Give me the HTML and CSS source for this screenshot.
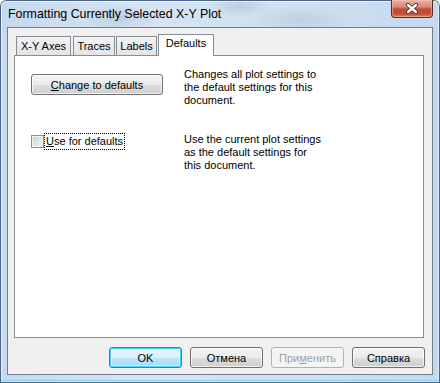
FILE: index.html
```html
<!DOCTYPE html>
<html lang="en">
<head>
    <meta charset="UTF-8">
    <title>Formatting Currently Selected X-Y Plot</title>
    <link rel="stylesheet" href="styles.css">
</head>
<body>
    <div class="window">
        <div class="titlebar">
            <span class="title">Formatting Currently Selected X-Y Plot</span>
            <button type="button" class="close" aria-label="Close">
                <svg width="14" height="11" viewBox="0 0 14 11">
                    <path d="M3 2 L11 9 M11 2 L3 9" stroke="#4a2a26" stroke-width="4.2" stroke-linecap="round"/>
                    <path d="M3 2 L11 9 M11 2 L3 9" stroke="#ffffff" stroke-width="2.4" stroke-linecap="round"/>
                </svg>
            </button>
        </div>

        <div class="client">
            <div class="tabs">
                <div class="tab tab-axes">X-Y Axes</div>
                <div class="tab tab-traces">Traces</div>
                <div class="tab tab-labels">Labels</div>
                <div class="tab tab-defaults active">Defaults</div>
            </div>

            <div class="panel">
                <div class="row">
                    <div class="control">
                        <button type="button" class="button wide"><u>C</u>hange to defaults</button>
                    </div>
                    <p class="desc">Changes all plot settings to<br>the default settings for this<br>document.</p>
                </div>
                <div class="row second">
                    <label class="control check">
                        <span class="box"></span>
                        <span class="focus"><u>U</u>se for defaults</span>
                    </label>
                    <p class="desc">Use the current plot settings<br>as the default settings for<br>this document.</p>
                </div>
            </div>

            <div class="dialog-buttons">
                <button type="button" class="button default">OK</button>
                <button type="button" class="button">Отмена</button>
                <button type="button" class="button disabled">При<u>м</u>енить</button>
                <button type="button" class="button">Справка</button>
            </div>
        </div>
    </div>
</body>
</html>
```

FILE: styles.css
```css
body {
    margin: 0;
    font-family: 'Liberation Sans', Arial, sans-serif;
    font-size: 11px;
    color: #000;
}

.window {
    width: 440px;
    height: 383px;
    box-sizing: border-box;
    border-radius: 6px 6px 0 0;
    background:
        radial-gradient(ellipse 40px 14px at 120px 18px, rgba(150, 165, 185, 0.35), transparent),
        radial-gradient(ellipse 30px 12px at 240px 6px, rgba(140, 155, 175, 0.3), transparent),
        radial-gradient(ellipse 50px 14px at 300px 20px, rgba(150, 165, 185, 0.3), transparent),
        linear-gradient(to right, #c6d9ee 0%, #d6e4f3 30%, #d0e0f1 70%, #c4d8ee 100%);
    box-shadow:
        inset 0 0 0 1px #4d6688,
        inset 0 0 0 2px rgba(255, 255, 255, 0.55),
        inset 0 -3px 0 #86d4f2;
}

.titlebar {
    height: 27px;
    display: flex;
    justify-content: space-between;
    align-items: flex-start;
}

.title {
    font-size: 12.4px;
    padding: 7px 0 0 8px;
    color: #000;
}

.close {
    width: 42px;
    height: 18px;
    margin-right: 7px;
    padding: 0;
    border: 1px solid #5d2a22;
    border-top: none;
    border-radius: 0 0 4px 4px;
    background: linear-gradient(#eab0a2 0%, #d98b7a 40%, #c44f3a 52%, #c24a33 78%, #dd7c5d 100%);
    box-shadow: inset 0 0 0 1px rgba(255, 210, 200, 0.45);
    display: flex;
    align-items: center;
    justify-content: center;
}

.close svg {
    display: block;
}

.client {
    margin: 0 7px;
    width: 426px;
    height: 348px;
    box-sizing: border-box;
    border: 1px solid #6f7d8f;
    background-color: #f0f0f0;
}

.tabs {
    display: flex;
    align-items: flex-end;
    height: 21px;
    margin: 6px 0 0 8px;
    position: relative;
    z-index: 1;
}

.tab {
    box-sizing: border-box;
    height: 19px;
    margin-right: 1px;
    border: 1px solid #898c95;
    border-bottom: none;
    background: linear-gradient(#f3f3f3, #e4e4e4);
    text-align: center;
    line-height: 19px;
}

.tab-axes { width: 55px; }
.tab-traces { width: 42px; margin-left: 1px; }
.tab-labels { width: 41px; }

.tab.active {
    width: 56px;
    height: 22px;
    margin-bottom: -1px;
    background: #fff;
    line-height: 17px;
}

.panel {
    margin-left: 6px;
    width: 410px;
    height: 283px;
    box-sizing: border-box;
    border: 1px solid #898c95;
    background-color: #fff;
    padding-top: 12px;
}

.row {
    display: grid;
    grid-template-columns: 153px auto;
    padding-left: 16px;
}

.row.second {
    margin-top: 26px;
}

.desc {
    margin: 0;
    line-height: 13px;
}

.control {
    padding-top: 6px;
}

.button {
    box-sizing: border-box;
    width: 73px;
    height: 21px;
    padding: 0;
    font-family: inherit;
    font-size: 11px;
    font-weight: normal;
    color: #000;
    border: 1px solid #707070;
    border-radius: 3px;
    background: linear-gradient(#f2f2f2 0%, #ebebeb 50%, #dddddd 51%, #cfcfcf 100%);
    box-shadow: inset 0 0 0 1px rgba(255, 255, 255, 0.7);
}

.button.wide {
    width: 132px;
}

.button.default {
    border-color: #3c7fb1;
    background: linear-gradient(#eaf6fd 0%, #d9f0fc 50%, #bee6fd 51%, #a7d9f5 100%);
    box-shadow: inset 0 0 0 1px #48d0f8, inset 0 0 0 2px rgba(255, 255, 255, 0.5);
}

.button.disabled {
    color: #a0a0a0;
    border-color: #adb2b5;
    background: #f4f4f4;
    box-shadow: none;
}

.check {
    display: flex;
    align-items: center;
    padding-top: 0;
    height: 16px;
}

.box {
    width: 11px;
    height: 11px;
    border: 1px solid #8e8f8f;
    background: linear-gradient(135deg, #cbcfd5, #f6f6f6);
    box-shadow: inset 0 0 0 1px #f4f4f4;
    margin-right: 1px;
}

.focus {
    outline: 1px dotted #000;
    padding: 1px 1px 1px 1px;
    line-height: 13px;
}

.dialog-buttons {
    display: flex;
    justify-content: flex-end;
    gap: 8px;
    margin-top: 9px;
    padding-right: 7px;
}
```
